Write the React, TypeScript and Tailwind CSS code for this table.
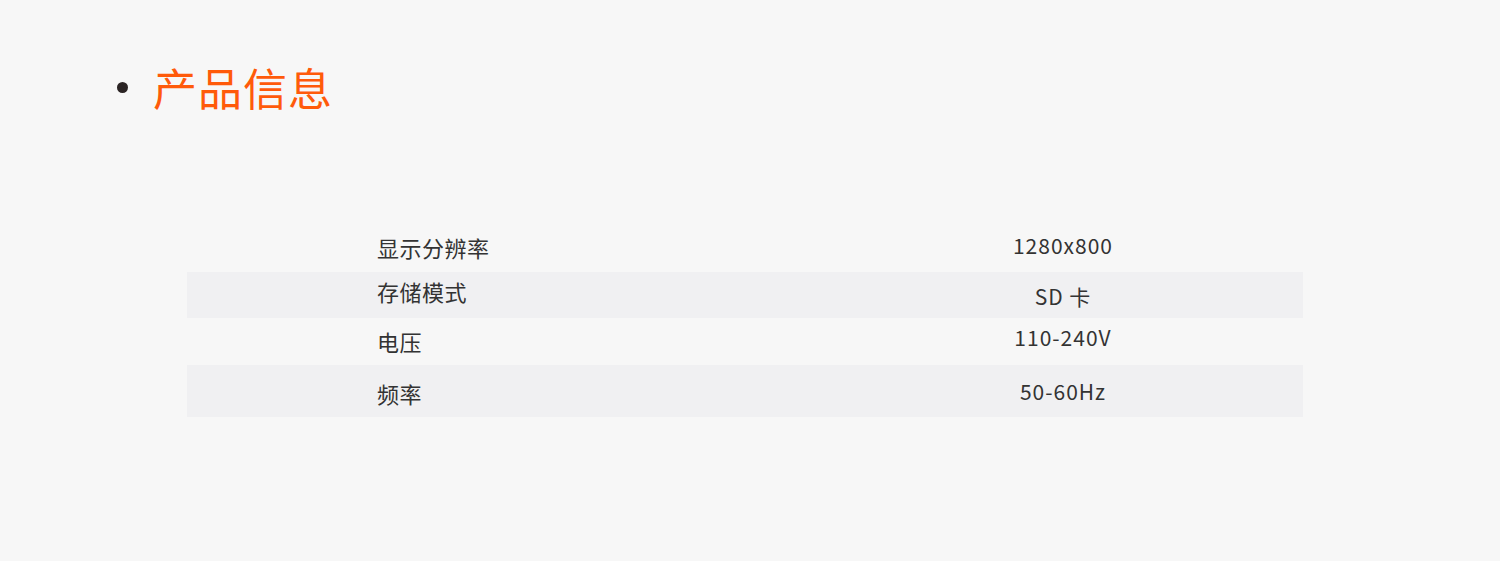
import React from "react";

type Row = {
  label: string;
  value: string;
  shaded: boolean;
  h: string;
  labelPad: string;
  valuePad: string;
};

const rows: Row[] = [
  { label: "显示分辨率", value: "1280x800", shaded: false, h: "h-[47px]", labelPad: "pt-[11px]", valuePad: "pt-[10px]" },
  { label: "存储模式", value: "SD 卡", shaded: true, h: "h-[46px]", labelPad: "pt-[8px]", valuePad: "pt-[14px]" },
  { label: "电压", value: "110-240V", shaded: false, h: "h-[47px]", labelPad: "pt-[12px]", valuePad: "pt-[9px]" },
  { label: "频率", value: "50-60Hz", shaded: true, h: "h-[52px]", labelPad: "pt-[17px]", valuePad: "pt-[16px]" },
];

const App: React.FC = () => {
  return (
    <div
      className="min-h-[561px] w-full bg-[#f7f7f7] text-[#333333]"
      style={{ fontFamily: '"Noto Sans CJK SC", "Noto Sans", sans-serif' }}
    >
      {/* Section title */}
      <div className="flex items-center pt-[65px] pl-[117px]">
        <span className="w-[11px] h-[11px] rounded-full bg-[#2b2424]" />
        <h1 className="ml-[25px] text-[44px] leading-[44px] font-normal text-[#ff5a0a] tracking-[1px]">
          产品信息
        </h1>
      </div>

      {/* Spec table */}
      <div className="mt-[116px] ml-[187px] w-[1116px]">
        {rows.map((row) => (
          <div
            key={row.label}
            className={`flex ${row.h} ${row.shaded ? "bg-[#f0f0f2]" : ""}`}
          >
            <div className={`w-[776px] pl-[190px] ${row.labelPad}`}>
              <span className="text-[22px] leading-[22px] tracking-[0.5px]">
                {row.label}
              </span>
            </div>
            <div className={`w-[200px] text-center ${row.valuePad}`}>
              <span className="text-[21px] leading-[21px] tracking-[1px]">
                {row.value}
              </span>
            </div>
          </div>
        ))}
      </div>
    </div>
  );
};

export default App;
